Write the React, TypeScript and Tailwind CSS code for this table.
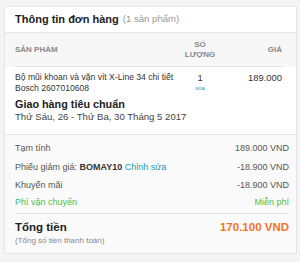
export default function App() {
  return (
    <div
      className="min-h-[262px] bg-[#f4f4f4] pt-[6px] pl-[4px] pr-[3px] text-[#333]"
      style={{ fontFamily: '"Liberation Sans", Arial, sans-serif' }}
    >
      <div className="h-[248px] border border-[#e6e6e6] bg-white flex flex-col">
        {/* Header */}
        <div className="h-[26px] border-b border-[#e8e8e8] px-[10px] flex items-center gap-[4px]">
          <span className="text-[11px] font-bold text-[#222]">Thông tin đơn hàng</span>
          <span className="text-[9.6px] text-[#999]">(1 sản phẩm)</span>
        </div>

        {/* Table head */}
        <div className="bg-[#f7f7f7]">
          <div className="mx-[10px] mr-[14px] h-[34px] border-b border-[#e2e2e2] grid grid-cols-[1fr_40px_62px] items-center text-[8px] font-bold text-[#888] uppercase leading-[10px]">
            <div>Sản phẩm</div>
            <div className="text-center">Số<br />Lượng</div>
            <div className="text-right">Giá</div>
          </div>
        </div>

        {/* Product */}
        <div className="px-[10px] pr-[14px] pt-[5px] h-[67px]">
          <div className="grid grid-cols-[1fr_40px_62px] text-[8.6px] leading-[11px] text-[#333]">
            <div className="whitespace-nowrap">
              Bộ mũi khoan và vặn vít X-Line 34 chi tiết
              <br />
              Bosch 2607010608
            </div>
            <div className="flex flex-col items-center text-[9.4px]">
              <span>1</span>
              <span className="text-[6px] leading-[11px] text-[#1a9cb7]">xóa</span>
            </div>
            <div className="text-right text-[9.4px]">189.000</div>
          </div>
          <div className="mt-[4px] text-[10.8px] font-bold leading-[13px] text-[#222]">
            Giao hàng tiêu chuẩn
          </div>
          <div className="text-[9.6px] leading-[12px] text-[#444]">
            Thứ Sáu, 26 - Thứ Ba, 30 Tháng 5 2017
          </div>
        </div>

        {/* Summary */}
        <div className="flex-1 border-t border-[#e6e6e6] bg-[#fafafa] pl-[10px] pr-[7px] pt-[5px] text-[9px] text-[#555]">
          <div className="flex justify-between h-[18px] items-center">
            <span>Tạm tính</span>
            <span>189.000 VND</span>
          </div>
          <div className="flex justify-between h-[19px] items-center">
            <span>
              Phiếu giảm giá: <span className="font-bold text-[#333]">BOMAY10</span>{" "}
              <span className="text-[#1a9cb7]">Chỉnh sửa</span>
            </span>
            <span>-18.900 VND</span>
          </div>
          <div className="flex justify-between h-[18px] items-center">
            <span>Khuyến mãi</span>
            <span>-18.900 VND</span>
          </div>
          <div className="flex justify-between h-[15px] items-center text-[#4cbf4c]">
            <span>Phí vận chuyển</span>
            <span>Miễn phí</span>
          </div>
          <div className="mt-[3px] border-t border-[#e2e2e2] pt-[6px]">
            <div className="flex justify-between items-center h-[15px]">
              <span className="text-[11.5px] font-bold text-[#222]">Tổng tiền</span>
              <span className="text-[11.5px] font-bold text-[#f57224]">170.100 VND</span>
            </div>
            <div className="text-[8px] leading-[12px] text-[#888]">(Tổng số tiền thanh toán)</div>
          </div>
        </div>
      </div>
    </div>
  );
}
